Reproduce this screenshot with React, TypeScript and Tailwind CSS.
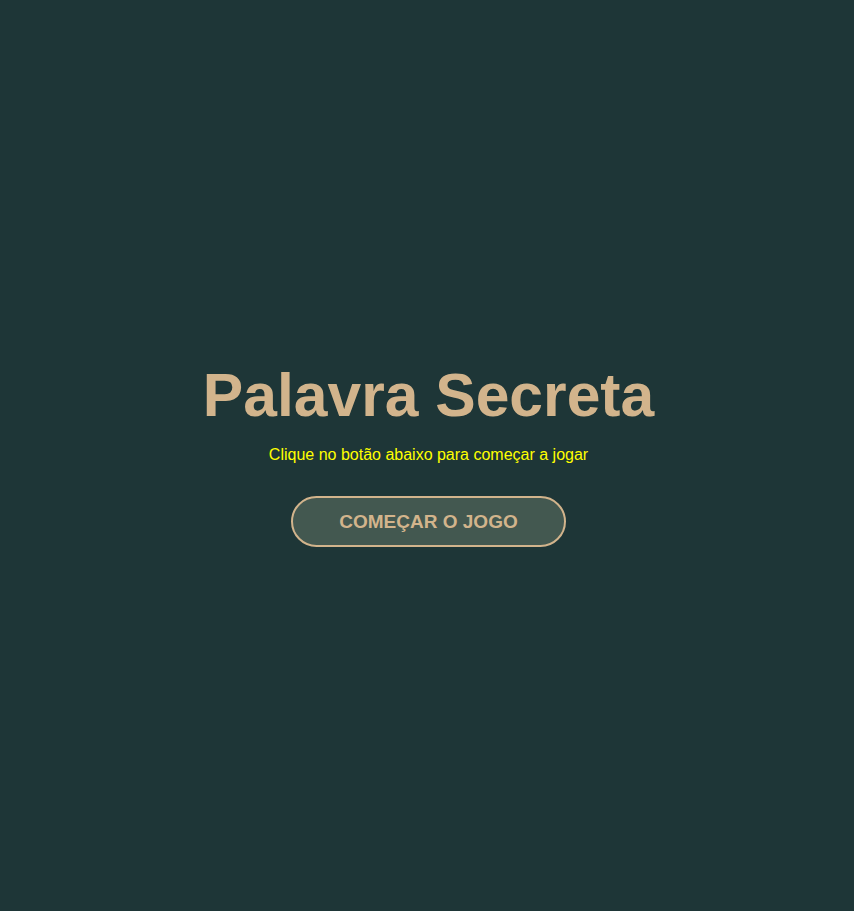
export default function App() {
  return (
    <main className="flex min-h-screen flex-col items-center justify-center bg-[#1e3637] pb-[3px] pl-[3px] font-['Liberation_Sans',Arial,sans-serif]">
      <h1 className="text-[60.6px] font-bold leading-[1.15] text-[#d2b48c]">Palavra Secreta</h1>
      <p className="mt-[13px] text-base text-[#ffff00]">Clique no botão abaixo para começar a jogar</p>
      <button className="mt-[29px] rounded-full border-2 border-[#d2b48c] bg-[#435850] px-[46.5px] py-[12.5px] text-[19px] font-bold leading-[1.15] text-[#d2b48c]">
        COMEÇAR O JOGO
      </button>
    </main>
  )
}
